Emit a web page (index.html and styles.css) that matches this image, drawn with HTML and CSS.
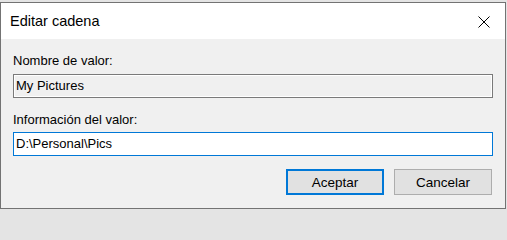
FILE: index.html
```html
<!DOCTYPE html>
<html lang="es">
<head>
<meta charset="utf-8">
<title>Editar cadena</title>
<link rel="stylesheet" href="styles.css">
</head>
<body>
<div class="dialog">
  <div class="titlebar">
    <span class="title">Editar cadena</span>
    <svg class="close" width="12" height="12" viewBox="0 0 12 12" aria-label="Cerrar">
      <path d="M0.5 0.5 L11.5 11.5 M11.5 0.5 L0.5 11.5" stroke="#000" stroke-width="1" fill="none"/>
    </svg>
  </div>
  <div class="content">
    <label class="label first">Nombre de valor:</label>
    <div class="field readonly">My Pictures</div>
    <label class="label second">Información del valor:</label>
    <div class="field active">D:\Personal\Pics</div>
    <div class="buttons">
      <button class="btn default">Aceptar</button>
      <button class="btn">Cancelar</button>
    </div>
  </div>
</div>
</body>
</html>
```
FILE: styles.css
```css
html {
  margin: 0;
  padding: 0;
  background: #e4e4e4;
}
body {
  margin: 0;
  width: 507px;
  height: 210px;
  background: #e4e4e4;
  padding-top: 2px;
  box-sizing: border-box;
  font-family: "Liberation Sans", Arial, sans-serif;
  font-size: 13px;
  color: #000;
  overflow: hidden;
}
.dialog {
  width: 506px;
  height: 207px;
  box-sizing: border-box;
  border: 1px solid #737373;
  background: #f0f0f0;
  display: flex;
  flex-direction: column;
}
.titlebar {
  height: 36px;
  background: #fff;
  display: flex;
  align-items: center;
  justify-content: space-between;
  padding: 0 15px 0 9px;
}
.title {
  font-size: 14.5px;
  line-height: 18px;
}
.close {
  display: block;
  margin-top: 1px;
}
.content {
  display: flex;
  flex-direction: column;
  padding: 0 12px;
}
.label {
  display: block;
  line-height: 15px;
  height: 15px;
}
.label.first {
  margin-top: 14px;
}
.label.second {
  margin-top: 14px;
}
.field {
  height: 24px;
  box-sizing: border-box;
  line-height: 22px;
  padding-left: 2px;
  white-space: nowrap;
}
.field.readonly {
  margin-top: 6px;
  border: 1px solid #7a7a7a;
  background: #f0f0f0;
  box-shadow: inset 1px 1px 0 #fff, inset -1px -1px 0 #fff;
}
.field.active {
  margin-top: 5px;
  border: 1px solid #0078d7;
  background: #fff;
}
.buttons {
  display: flex;
  justify-content: flex-end;
  gap: 10px;
  margin-top: 13px;
  padding-right: 1px;
}
.btn {
  width: 98px;
  height: 26px;
  box-sizing: border-box;
  background: #e1e1e1;
  border: 1px solid #adadad;
  font-family: "Liberation Sans", Arial, sans-serif;
  font-size: 13.5px;
  color: #000;
  padding: 0;
  margin: 0;
}
.btn.default {
  border: 2px solid #0078d7;
}
```
